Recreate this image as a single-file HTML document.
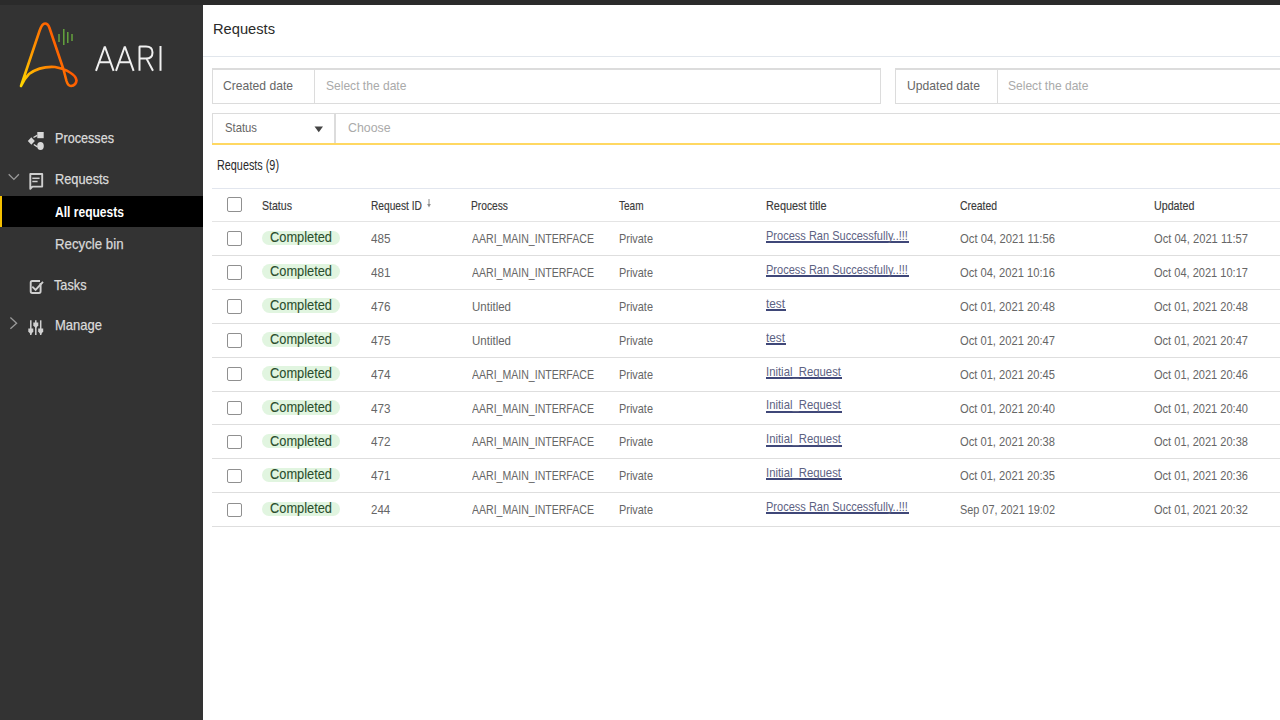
<!DOCTYPE html>
<html><head><meta charset="utf-8"><style>
html,body{margin:0;padding:0;width:1280px;height:720px;overflow:hidden;background:#fff;}
body{position:relative;font-family:"Liberation Sans",sans-serif;}
.t{position:absolute;white-space:nowrap;transform-origin:0 0;}
#top{position:absolute;left:0;top:0;width:1280px;height:5px;background:#2b2b2b;}
#side{position:absolute;left:0;top:5px;width:203px;height:715px;background:#333333;}
.hl{position:absolute;left:212px;width:1068px;height:1px;background:#dedede;}
.cb{position:absolute;left:227px;width:12.5px;height:12.5px;border:1.5px solid #909090;border-radius:2px;box-sizing:content-box;}
.pill{position:absolute;left:262px;width:78px;height:14.5px;border-radius:8px;background:#e1f5e0;}
.ul{position:absolute;height:2px;background:#3f4778;}
.box{position:absolute;border:1px solid #dcdcdc;box-sizing:border-box;}
</style></head><body>
<div id="top"></div>
<div id="side"></div>
<div style="position:absolute;left:0;top:196px;width:203px;height:31px;background:#000"></div>
<div style="position:absolute;left:0;top:196px;width:2px;height:31px;background:#f5c000"></div>
<svg style="position:absolute;left:0;top:0" width="203" height="360" viewBox="0 0 203 360">
<defs><linearGradient id="lg" gradientUnits="userSpaceOnUse" x1="22" y1="84" x2="72" y2="62">
<stop offset="0" stop-color="#ffd400"/><stop offset="0.4" stop-color="#ff9a00"/><stop offset="1" stop-color="#ff5200"/></linearGradient></defs>
<path d="M21,86 L39.5,31 Q42,23.5 45,23.5 Q48,23.5 49.5,28 L63.5,69.5 L66.5,81 Q68,86 71,86 Q76,85.5 76.5,80.5 Q76,76 70,72.5 Q64,68.5 55,67 Q40,66 29,74 Q24,79 21,86" fill="none" stroke="url(#lg)" stroke-width="2.6" stroke-linejoin="round" stroke-linecap="round"/>
<g stroke="#6cb33f" stroke-width="1.3"><path d="M59,34 V42"/><path d="M63.8,29 V45"/><path d="M67.8,32 V43"/><path d="M72,34 V41"/></g>
<g fill="none" stroke="#f0f0f0" stroke-width="2" stroke-linejoin="bevel">
<path d="M96,70.8 L104.8,46.5 L113.6,70.8 M99.2,62.2 H110.4"/>
<path d="M116,70.8 L124.8,46.5 L133.6,70.8 M119.2,62.2 H130.4"/>
<path d="M139.5,70.8 V46.5 H146 Q152.5,46.5 152.5,52.5 Q152.5,58.6 146,58.6 H139.5 M146.5,58.6 L153,70.8"/>
<path d="M160.5,46 V70.8"/>
</g>
<!-- processes icon -->
<g fill="#d8d8d8">
<rect x="37.3" y="132" width="6.4" height="6.2"/>
<ellipse cx="40.5" cy="146" rx="3.3" ry="3.9"/>
<path d="M31.3,137.2 L34.8,141 L31.3,144.8 L27.8,141 Z"/>
</g>
<g stroke="#d8d8d8" stroke-width="1.4"><path d="M33.5,137.5 L37.3,135.3"/><path d="M33.8,144.5 L37.5,146.8"/></g>
<!-- requests chevron + icon -->
<path d="M8.7,174.3 L13.9,179.4 L18.9,174.3" fill="none" stroke="#9a9a9a" stroke-width="1.3"/>
<path d="M30.3,188.8 V174 H42.2 V186.6 H32.4 Z" fill="none" stroke="#cfcfcf" stroke-width="1.9" stroke-linejoin="round"/>
<g stroke="#cfcfcf" stroke-width="1.5"><path d="M32.3,178.3 H39.6"/><path d="M32.3,181.5 H37.6"/></g>
<!-- tasks icon -->
<path d="M40.6,283 V291.3 Q40.6,293 39,293 H32.3 Q30.7,293 30.7,291.3 V282.6 Q30.7,281 32.3,281 H40" fill="none" stroke="#cfcfcf" stroke-width="1.9"/>
<path d="M32.3,286.6 L35.6,289.9 L43,281.8" fill="none" stroke="#cfcfcf" stroke-width="1.9"/>
<!-- manage chevron + icon -->
<path d="M10.4,317.6 L16.6,323.2 L10.4,328.8" fill="none" stroke="#9a9a9a" stroke-width="1.3"/>
<g stroke="#d0d0d0" stroke-width="1.5"><path d="M30.8,320.3 V335"/><path d="M35.8,320.3 V335"/><path d="M40.7,320.3 V335"/></g>
<g fill="#d0d0d0"><path d="M28.3,328.6 H33.3 V331.6 L30.8,334.6 L28.3,331.6 Z"/><path d="M33.3,322.6 H38.3 V325.4 L35.8,328.2 L33.3,325.4 Z"/><path d="M38.2,328.6 H43.2 V331.6 L40.7,334.6 L38.2,331.6 Z"/></g>
</svg>
<!-- header line -->
<div style="position:absolute;left:203px;top:56px;width:1077px;height:1px;background:#e1e6ec"></div>
<!-- filter row 1 -->
<div class="box" style="left:212px;top:67.5px;width:669px;height:36px;border-top-width:2px"></div>
<div style="position:absolute;left:314px;top:68px;width:1px;height:35px;background:#dcdcdc"></div>
<div class="box" style="left:895px;top:67.5px;width:400px;height:36px;border-top-width:2px"></div>
<div style="position:absolute;left:997px;top:68px;width:1px;height:35px;background:#dcdcdc"></div>
<!-- filter row 2 -->
<div class="box" style="left:212px;top:113px;width:1090px;height:32px;border-bottom:none"></div>
<div style="position:absolute;left:334px;top:113px;width:1.5px;height:30px;background:#dcdcdc"></div>
<div style="position:absolute;left:212px;top:143px;width:1068px;height:2px;background:#ffd862"></div>
<svg style="position:absolute;left:314px;top:126px" width="10" height="7"><path d="M0.5 0.5 H9 L4.75 6.2 Z" fill="#444"/></svg>
<!-- table header lines -->
<div class="hl" style="top:188px;background:#e2e6ee"></div>
<div class="hl" style="top:221px;background:#e4e4e4"></div>
<div class="cb" style="top:197.3px"></div>
<svg style="position:absolute;left:426px;top:199px" width="6" height="10"><path d="M3 0 V6" stroke="#8a8a8a" stroke-width="1"/><path d="M1.2 5 H4.8 L3 8.6 Z" fill="#8a8a8a"/></svg>
<div class="ul" style="left:766px;top:241.10px;width:142.5px"></div><div class="pill" style="top:230.50px"></div><div class="cb" style="top:231.30px"></div><div class="hl" style="top:254.90px"></div><div class="ul" style="left:766px;top:275.00px;width:142.5px"></div><div class="pill" style="top:264.40px"></div><div class="cb" style="top:265.20px"></div><div class="hl" style="top:288.80px"></div><div class="ul" style="left:766px;top:308.90px;width:19.5px"></div><div class="pill" style="top:298.30px"></div><div class="cb" style="top:299.10px"></div><div class="hl" style="top:322.70px"></div><div class="ul" style="left:766px;top:342.80px;width:19.5px"></div><div class="pill" style="top:332.20px"></div><div class="cb" style="top:333.00px"></div><div class="hl" style="top:356.60px"></div><div class="ul" style="left:766px;top:376.70px;width:75.5px"></div><div class="pill" style="top:366.10px"></div><div class="cb" style="top:366.90px"></div><div class="hl" style="top:390.50px"></div><div class="ul" style="left:766px;top:410.60px;width:75.5px"></div><div class="pill" style="top:400.00px"></div><div class="cb" style="top:400.80px"></div><div class="hl" style="top:424.40px"></div><div class="ul" style="left:766px;top:444.50px;width:75.5px"></div><div class="pill" style="top:433.90px"></div><div class="cb" style="top:434.70px"></div><div class="hl" style="top:458.30px"></div><div class="ul" style="left:766px;top:478.40px;width:75.5px"></div><div class="pill" style="top:467.80px"></div><div class="cb" style="top:468.60px"></div><div class="hl" style="top:492.20px"></div><div class="ul" style="left:766px;top:512.30px;width:142.5px"></div><div class="pill" style="top:501.70px"></div><div class="cb" style="top:502.50px"></div><div class="hl" style="top:526.10px"></div>
<div class="t" style="left:55.00px;top:131.03px;font-size:14.5px;line-height:14.5px;color:#dcdcdc;transform:scaleX(0.8716);-webkit-text-stroke:0.25px #d8d8d8;">Processes</div><div class="t" style="left:55.00px;top:171.73px;font-size:14.5px;line-height:14.5px;color:#dcdcdc;transform:scaleX(0.8815);-webkit-text-stroke:0.25px #d8d8d8;">Requests</div><div class="t" style="left:54.50px;top:204.63px;font-size:14.5px;line-height:14.5px;color:#ffffff;font-weight:bold;transform:scaleX(0.8313);">All requests</div><div class="t" style="left:55.00px;top:236.53px;font-size:14.5px;line-height:14.5px;color:#d8d8d8;transform:scaleX(0.9139);-webkit-text-stroke:0.25px #d8d8d8;">Recycle bin</div><div class="t" style="left:54.00px;top:277.73px;font-size:14.5px;line-height:14.5px;color:#dcdcdc;transform:scaleX(0.8769);-webkit-text-stroke:0.25px #d8d8d8;">Tasks</div><div class="t" style="left:55.00px;top:317.73px;font-size:14.5px;line-height:14.5px;color:#dcdcdc;transform:scaleX(0.8969);-webkit-text-stroke:0.25px #d8d8d8;">Manage</div><div class="t" style="left:212.70px;top:20.98px;font-size:15.5px;line-height:15.5px;color:#2a2a2a;transform:scaleX(0.9468);">Requests</div><div class="t" style="left:223.00px;top:79.76px;font-size:12.8px;line-height:12.8px;color:#666;transform:scaleX(0.9458);">Created date</div><div class="t" style="left:325.70px;top:79.76px;font-size:12.8px;line-height:12.8px;color:#aaa;transform:scaleX(0.9415);">Select the date</div><div class="t" style="left:906.70px;top:79.76px;font-size:12.8px;line-height:12.8px;color:#666;transform:scaleX(0.9497);">Updated date</div><div class="t" style="left:1008.40px;top:79.76px;font-size:12.8px;line-height:12.8px;color:#aaa;transform:scaleX(0.9415);">Select the date</div><div class="t" style="left:224.80px;top:122.46px;font-size:12.8px;line-height:12.8px;color:#666;transform:scaleX(0.8818);">Status</div><div class="t" style="left:347.70px;top:122.46px;font-size:12.8px;line-height:12.8px;color:#aaa;transform:scaleX(0.9655);">Choose</div><div class="t" style="left:217.20px;top:157.95px;font-size:14px;line-height:14px;color:#2a2a2a;transform:scaleX(0.7736);">Requests (9)</div><div class="t" style="left:262.30px;top:199.26px;font-size:13.4px;line-height:13.4px;color:#3a3a3a;transform:scaleX(0.7897);-webkit-text-stroke:0.15px #3a3a3a;">Status</div><div class="t" style="left:370.50px;top:199.26px;font-size:13.4px;line-height:13.4px;color:#3a3a3a;transform:scaleX(0.7608);-webkit-text-stroke:0.15px #3a3a3a;">Request ID</div><div class="t" style="left:471.30px;top:199.26px;font-size:13.4px;line-height:13.4px;color:#3a3a3a;transform:scaleX(0.7644);-webkit-text-stroke:0.15px #3a3a3a;">Process</div><div class="t" style="left:619.00px;top:199.26px;font-size:13.4px;line-height:13.4px;color:#3a3a3a;transform:scaleX(0.7507);-webkit-text-stroke:0.15px #3a3a3a;">Team</div><div class="t" style="left:766.25px;top:199.26px;font-size:13.4px;line-height:13.4px;color:#3a3a3a;transform:scaleX(0.8122);-webkit-text-stroke:0.15px #3a3a3a;">Request title</div><div class="t" style="left:960.20px;top:199.26px;font-size:13.4px;line-height:13.4px;color:#3a3a3a;transform:scaleX(0.7761);-webkit-text-stroke:0.15px #3a3a3a;">Created</div><div class="t" style="left:1153.80px;top:199.26px;font-size:13.4px;line-height:13.4px;color:#3a3a3a;transform:scaleX(0.7974);-webkit-text-stroke:0.15px #3a3a3a;">Updated</div><div class="t" style="left:370.50px;top:232.06px;font-size:13.4px;line-height:13.4px;color:#666;transform:scaleX(0.8722);">485</div><div class="t" style="left:471.50px;top:232.06px;font-size:13.4px;line-height:13.4px;color:#666;transform:scaleX(0.7877);">AARI_MAIN_INTERFACE</div><div class="t" style="left:619.00px;top:232.06px;font-size:13.4px;line-height:13.4px;color:#666;transform:scaleX(0.8152);">Private</div><div class="t" style="left:766.20px;top:228.96px;font-size:13.4px;line-height:13.4px;color:#5d6283;transform:scaleX(0.8231);">Process Ran Successfully..!!!</div><div class="t" style="left:960.00px;top:232.06px;font-size:13.4px;line-height:13.4px;color:#666;transform:scaleX(0.8408);">Oct 04, 2021 11:56</div><div class="t" style="left:1153.80px;top:232.06px;font-size:13.4px;line-height:13.4px;color:#666;transform:scaleX(0.8319);">Oct 04, 2021 11:57</div><div class="t" style="left:270.00px;top:230.14px;font-size:14.6px;line-height:14.6px;color:#2a4d2c;transform:scaleX(0.8781);-webkit-text-stroke:0.1px #2a4d2c;">Completed</div><div class="t" style="left:370.50px;top:265.96px;font-size:13.4px;line-height:13.4px;color:#666;transform:scaleX(0.8722);">481</div><div class="t" style="left:471.50px;top:265.96px;font-size:13.4px;line-height:13.4px;color:#666;transform:scaleX(0.7877);">AARI_MAIN_INTERFACE</div><div class="t" style="left:619.00px;top:265.96px;font-size:13.4px;line-height:13.4px;color:#666;transform:scaleX(0.8152);">Private</div><div class="t" style="left:766.20px;top:262.86px;font-size:13.4px;line-height:13.4px;color:#5d6283;transform:scaleX(0.8231);">Process Ran Successfully..!!!</div><div class="t" style="left:960.00px;top:265.96px;font-size:13.4px;line-height:13.4px;color:#666;transform:scaleX(0.8334);">Oct 04, 2021 10:16</div><div class="t" style="left:1153.80px;top:265.96px;font-size:13.4px;line-height:13.4px;color:#666;transform:scaleX(0.8247);">Oct 04, 2021 10:17</div><div class="t" style="left:270.00px;top:264.04px;font-size:14.6px;line-height:14.6px;color:#2a4d2c;transform:scaleX(0.8781);-webkit-text-stroke:0.1px #2a4d2c;">Completed</div><div class="t" style="left:370.50px;top:299.86px;font-size:13.4px;line-height:13.4px;color:#666;transform:scaleX(0.8722);">476</div><div class="t" style="left:471.50px;top:299.86px;font-size:13.4px;line-height:13.4px;color:#666;transform:scaleX(0.8584);">Untitled</div><div class="t" style="left:619.00px;top:299.86px;font-size:13.4px;line-height:13.4px;color:#666;transform:scaleX(0.8152);">Private</div><div class="t" style="left:766.20px;top:296.76px;font-size:13.4px;line-height:13.4px;color:#5d6283;transform:scaleX(0.8797);">test</div><div class="t" style="left:960.00px;top:299.86px;font-size:13.4px;line-height:13.4px;color:#666;transform:scaleX(0.8334);">Oct 01, 2021 20:48</div><div class="t" style="left:1153.80px;top:299.86px;font-size:13.4px;line-height:13.4px;color:#666;transform:scaleX(0.8247);">Oct 01, 2021 20:48</div><div class="t" style="left:270.00px;top:297.94px;font-size:14.6px;line-height:14.6px;color:#2a4d2c;transform:scaleX(0.8781);-webkit-text-stroke:0.1px #2a4d2c;">Completed</div><div class="t" style="left:370.50px;top:333.76px;font-size:13.4px;line-height:13.4px;color:#666;transform:scaleX(0.8722);">475</div><div class="t" style="left:471.50px;top:333.76px;font-size:13.4px;line-height:13.4px;color:#666;transform:scaleX(0.8584);">Untitled</div><div class="t" style="left:619.00px;top:333.76px;font-size:13.4px;line-height:13.4px;color:#666;transform:scaleX(0.8152);">Private</div><div class="t" style="left:766.20px;top:330.66px;font-size:13.4px;line-height:13.4px;color:#5d6283;transform:scaleX(0.8797);">test</div><div class="t" style="left:960.00px;top:333.76px;font-size:13.4px;line-height:13.4px;color:#666;transform:scaleX(0.8334);">Oct 01, 2021 20:47</div><div class="t" style="left:1153.80px;top:333.76px;font-size:13.4px;line-height:13.4px;color:#666;transform:scaleX(0.8247);">Oct 01, 2021 20:47</div><div class="t" style="left:270.00px;top:331.84px;font-size:14.6px;line-height:14.6px;color:#2a4d2c;transform:scaleX(0.8781);-webkit-text-stroke:0.1px #2a4d2c;">Completed</div><div class="t" style="left:370.50px;top:367.66px;font-size:13.4px;line-height:13.4px;color:#666;transform:scaleX(0.8722);">474</div><div class="t" style="left:471.50px;top:367.66px;font-size:13.4px;line-height:13.4px;color:#666;transform:scaleX(0.7877);">AARI_MAIN_INTERFACE</div><div class="t" style="left:619.00px;top:367.66px;font-size:13.4px;line-height:13.4px;color:#666;transform:scaleX(0.8152);">Private</div><div class="t" style="left:766.20px;top:364.56px;font-size:13.4px;line-height:13.4px;color:#5d6283;transform:scaleX(0.8461);">Initial_Request</div><div class="t" style="left:960.00px;top:367.66px;font-size:13.4px;line-height:13.4px;color:#666;transform:scaleX(0.8334);">Oct 01, 2021 20:45</div><div class="t" style="left:1153.80px;top:367.66px;font-size:13.4px;line-height:13.4px;color:#666;transform:scaleX(0.8247);">Oct 01, 2021 20:46</div><div class="t" style="left:270.00px;top:365.74px;font-size:14.6px;line-height:14.6px;color:#2a4d2c;transform:scaleX(0.8781);-webkit-text-stroke:0.1px #2a4d2c;">Completed</div><div class="t" style="left:370.50px;top:401.56px;font-size:13.4px;line-height:13.4px;color:#666;transform:scaleX(0.8722);">473</div><div class="t" style="left:471.50px;top:401.56px;font-size:13.4px;line-height:13.4px;color:#666;transform:scaleX(0.7877);">AARI_MAIN_INTERFACE</div><div class="t" style="left:619.00px;top:401.56px;font-size:13.4px;line-height:13.4px;color:#666;transform:scaleX(0.8152);">Private</div><div class="t" style="left:766.20px;top:398.46px;font-size:13.4px;line-height:13.4px;color:#5d6283;transform:scaleX(0.8461);">Initial_Request</div><div class="t" style="left:960.00px;top:401.56px;font-size:13.4px;line-height:13.4px;color:#666;transform:scaleX(0.8334);">Oct 01, 2021 20:40</div><div class="t" style="left:1153.80px;top:401.56px;font-size:13.4px;line-height:13.4px;color:#666;transform:scaleX(0.8247);">Oct 01, 2021 20:40</div><div class="t" style="left:270.00px;top:399.64px;font-size:14.6px;line-height:14.6px;color:#2a4d2c;transform:scaleX(0.8781);-webkit-text-stroke:0.1px #2a4d2c;">Completed</div><div class="t" style="left:370.50px;top:435.46px;font-size:13.4px;line-height:13.4px;color:#666;transform:scaleX(0.8722);">472</div><div class="t" style="left:471.50px;top:435.46px;font-size:13.4px;line-height:13.4px;color:#666;transform:scaleX(0.7877);">AARI_MAIN_INTERFACE</div><div class="t" style="left:619.00px;top:435.46px;font-size:13.4px;line-height:13.4px;color:#666;transform:scaleX(0.8152);">Private</div><div class="t" style="left:766.20px;top:432.36px;font-size:13.4px;line-height:13.4px;color:#5d6283;transform:scaleX(0.8461);">Initial_Request</div><div class="t" style="left:960.00px;top:435.46px;font-size:13.4px;line-height:13.4px;color:#666;transform:scaleX(0.8334);">Oct 01, 2021 20:38</div><div class="t" style="left:1153.80px;top:435.46px;font-size:13.4px;line-height:13.4px;color:#666;transform:scaleX(0.8247);">Oct 01, 2021 20:38</div><div class="t" style="left:270.00px;top:433.54px;font-size:14.6px;line-height:14.6px;color:#2a4d2c;transform:scaleX(0.8781);-webkit-text-stroke:0.1px #2a4d2c;">Completed</div><div class="t" style="left:370.50px;top:469.36px;font-size:13.4px;line-height:13.4px;color:#666;transform:scaleX(0.8722);">471</div><div class="t" style="left:471.50px;top:469.36px;font-size:13.4px;line-height:13.4px;color:#666;transform:scaleX(0.7877);">AARI_MAIN_INTERFACE</div><div class="t" style="left:619.00px;top:469.36px;font-size:13.4px;line-height:13.4px;color:#666;transform:scaleX(0.8152);">Private</div><div class="t" style="left:766.20px;top:466.26px;font-size:13.4px;line-height:13.4px;color:#5d6283;transform:scaleX(0.8461);">Initial_Request</div><div class="t" style="left:960.00px;top:469.36px;font-size:13.4px;line-height:13.4px;color:#666;transform:scaleX(0.8334);">Oct 01, 2021 20:35</div><div class="t" style="left:1153.80px;top:469.36px;font-size:13.4px;line-height:13.4px;color:#666;transform:scaleX(0.8247);">Oct 01, 2021 20:36</div><div class="t" style="left:270.00px;top:467.44px;font-size:14.6px;line-height:14.6px;color:#2a4d2c;transform:scaleX(0.8781);-webkit-text-stroke:0.1px #2a4d2c;">Completed</div><div class="t" style="left:370.50px;top:503.26px;font-size:13.4px;line-height:13.4px;color:#666;transform:scaleX(0.86);">244</div><div class="t" style="left:471.50px;top:503.26px;font-size:13.4px;line-height:13.4px;color:#666;transform:scaleX(0.7877);">AARI_MAIN_INTERFACE</div><div class="t" style="left:619.00px;top:503.26px;font-size:13.4px;line-height:13.4px;color:#666;transform:scaleX(0.8152);">Private</div><div class="t" style="left:766.20px;top:500.16px;font-size:13.4px;line-height:13.4px;color:#5d6283;transform:scaleX(0.8231);">Process Ran Successfully..!!!</div><div class="t" style="left:960.00px;top:503.26px;font-size:13.4px;line-height:13.4px;color:#666;transform:scaleX(0.8121);">Sep 07, 2021 19:02</div><div class="t" style="left:1153.80px;top:503.26px;font-size:13.4px;line-height:13.4px;color:#666;transform:scaleX(0.8247);">Oct 01, 2021 20:32</div><div class="t" style="left:270.00px;top:501.34px;font-size:14.6px;line-height:14.6px;color:#2a4d2c;transform:scaleX(0.8781);-webkit-text-stroke:0.1px #2a4d2c;">Completed</div>
</body></html>
